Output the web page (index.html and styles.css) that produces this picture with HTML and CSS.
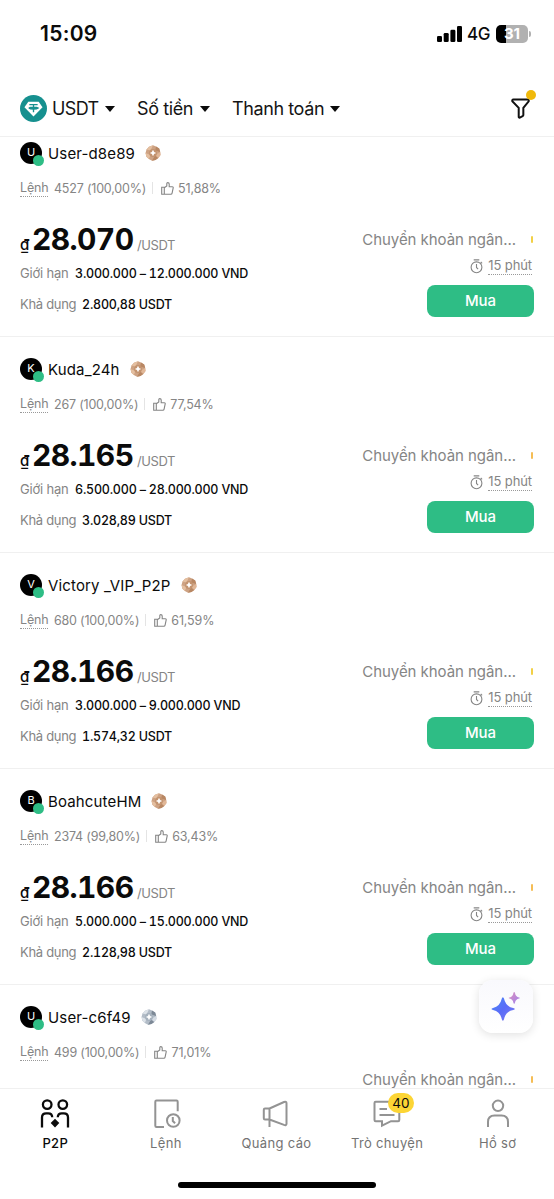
FILE: index.html
```html
<!DOCTYPE html>
<html lang="vi">
<head>
<meta charset="utf-8">
<meta name="viewport" content="width=device-width">
<title>P2P</title>
<link rel="stylesheet" href="styles.css">
</head>
<body>
<svg class="defs" aria-hidden="true">
  <defs>
    <linearGradient id="spark" x1="0" y1="0" x2="1" y2="1"><stop offset="0" stop-color="#4a8bf5"/><stop offset=".5" stop-color="#5a6cf8"/><stop offset="1" stop-color="#7d7cf0"/></linearGradient>
    <linearGradient id="spark-small" x1="0" y1="0" x2="1" y2="1"><stop offset="0" stop-color="#dc91bd"/><stop offset="1" stop-color="#a080ec"/></linearGradient>
  </defs>
  <symbol id="thumb" viewBox="0 0 13 13"><path d="M.7 5.2h2.6v7H.7zM3.3 5.8 5.8 4V1.6q0-1 .9-1 1.5 0 1.5 1.5v2.7h3.2q1 0 .8 1l-1.1 5.3q-.2 1.1-1.3 1.1H3.3"/></symbol>
  <symbol id="timer" viewBox="0 0 13 15"><circle cx="6.5" cy="8.3" r="5.4"/><path d="M3.7.9h5.6M6.5 5v3.5l1.6 1.6M10.7 3l1.4 1.4"/></symbol>
  <symbol id="medal" viewBox="0 0 16 16">
    <path fill="#cda283" d="m8 .3 3 1.2 3.2 1.9 1 3.5.3 3-2.2 3-2.8 2.1-3.5.7-3.2-1.6-2.4-2.3L.5 8l1-3.6L4 1.8z"/>
    <path fill="#e4bfa0" d="M8 .3 4 1.8 1.5 4.4l4 1.2zM.5 8l1 3.8 2.3 2.3 1.7-4z"/>
    <path fill="#b88763" d="m11 1.5 3.2 1.9 1 3.5-5-1.3zM7 15.7l3.5-.7 2.8-2.1-3.3-2.4z"/>
    <path fill="#e1b797" d="m15.2 6.9.3 3-2.2 3-3-3z"/>
    <circle cx="8" cy="8" r="3.9" fill="#c3936f"/>
    <path fill="#fff" d="M8 4.800q.5 2.700 3.200 3.200-2.700.500-3.200 3.200-.500-2.700-3.200-3.200 2.700-.500 3.200-3.200"/>
  </symbol>
  <symbol id="medal-silver" viewBox="0 0 16 16">
    <path fill="#b2bcc7" d="m8 .3 3 1.2 3.2 1.9 1 3.5.3 3-2.2 3-2.8 2.1-3.5.7-3.2-1.6-2.4-2.3L.5 8l1-3.6L4 1.8z"/>
    <path fill="#dce2e8" d="M8 .3 4 1.8 1.5 4.4l4 1.2zM.5 8l1 3.8 2.3 2.3 1.7-4z"/>
    <path fill="#7d8996" d="m11 1.5 3.2 1.9 1 3.5-5-1.3zM7 15.7l3.5-.7 2.8-2.1-3.3-2.4z"/>
    <path fill="#d5dce4" d="m15.2 6.9.3 3-2.2 3-3-3z"/>
    <circle cx="8" cy="8" r="3.9" fill="#a5b1bd"/>
    <path fill="#fff" d="M8 4.800q.5 2.700 3.200 3.200-2.700.500-3.200 3.200-.500-2.700-3.200-3.200 2.700-.500 3.200-3.200"/>
  </symbol>
</svg>

<div class="screen">
  <div class="status">
    <span class="clock">15:09</span>
    <div class="status-right">
      <svg class="signal" viewBox="0 0 26 16"><rect x="0" y="10" width="5" height="6" rx="1.3"/><rect x="6.7" y="7" width="5" height="9" rx="1.3"/><rect x="13.4" y="3.8" width="5" height="12.2" rx="1.3"/><rect x="20" y="0" width="5" height="16" rx="1.3"/></svg>
      <span class="network">4G</span>
      <span class="battery">31</span><i class="battery-cap"></i>
    </div>
  </div>

  <header class="filters">
    <svg class="coin" viewBox="0 0 26 26"><circle cx="13" cy="13" r="13" fill="#16908f"/><path fill="#fff" d="M8 6.6h10l3.7 5.3L13 20.7l-8.7-8.800z"/><path d="M9 9.300h8M13 9.300v7.400M8.500 12.500c1.500 1.300 7.500 1.300 9 0-1.500-1-7.500-1-9 0" fill="none" stroke="#16908f" stroke-width="1.300"/></svg>
    <span class="filter f-coin">USDT</span><i class="caret"></i>
    <span class="filter f-amount">Số tiền</span><i class="caret"></i>
    <span class="filter f-pay">Thanh toán</span><i class="caret"></i>
    <div class="funnel">
      <svg viewBox="0 0 18 20"><path d="M2.2 1.5h13.600q1.400 0 1 1.600l-5.100 6.300v6.800q0 .8-.7 1.100l-2.600 1.300q-1.100.4-1.100-.8V9.400L1.200 3.100q-.4-1.600 1-1.600z"/></svg>
      <i class="dot"></i>
    </div>
  </header>

  <main class="list">
    <article class="offer">
      <div class="user"><span class="avatar">U<i></i></span><span class="name">User-d8e89</span><svg class="medal"><use href="#medal"/></svg></div>
      <div class="stats"><span class="hint">Lệnh</span><span class="orders">4527 (100,00%)</span><i class="sep"></i><svg class="thumb"><use href="#thumb"/></svg><span>51,88%</span></div>
      <div class="body">
        <div class="info">
          <div class="price"><span class="cur">₫</span><b>28.070</b><span class="unit">/USDT</span></div>
          <div class="line"><span class="limit-label">Giới hạn</span><span class="value">3.000.000 – 12.000.000 VND</span></div>
          <div class="line"><span class="avail-label">Khả dụng</span><span class="value">2.800,88 USDT</span></div>
        </div>
        <div class="deal">
          <div class="method"><span>Chuyển khoản ngân...</span><i></i></div>
          <div class="time"><svg><use href="#timer"/></svg><span class="hint">15 phút</span></div>
          <button class="buy">Mua</button>
        </div>
      </div>
    </article>
    <article class="offer">
      <div class="user"><span class="avatar">K<i></i></span><span class="name">Kuda_24h</span><svg class="medal"><use href="#medal"/></svg></div>
      <div class="stats"><span class="hint">Lệnh</span><span class="orders">267 (100,00%)</span><i class="sep"></i><svg class="thumb"><use href="#thumb"/></svg><span>77,54%</span></div>
      <div class="body">
        <div class="info">
          <div class="price"><span class="cur">₫</span><b>28.165</b><span class="unit">/USDT</span></div>
          <div class="line"><span class="limit-label">Giới hạn</span><span class="value">6.500.000 – 28.000.000 VND</span></div>
          <div class="line"><span class="avail-label">Khả dụng</span><span class="value">3.028,89 USDT</span></div>
        </div>
        <div class="deal">
          <div class="method orange"><span>Chuyển khoản ngân...</span><i></i></div>
          <div class="time"><svg><use href="#timer"/></svg><span class="hint">15 phút</span></div>
          <button class="buy">Mua</button>
        </div>
      </div>
    </article>
    <article class="offer">
      <div class="user"><span class="avatar">V<i></i></span><span class="name">Victory _VIP_P2P</span><svg class="medal"><use href="#medal"/></svg></div>
      <div class="stats"><span class="hint">Lệnh</span><span class="orders">680 (100,00%)</span><i class="sep"></i><svg class="thumb"><use href="#thumb"/></svg><span>61,59%</span></div>
      <div class="body">
        <div class="info">
          <div class="price"><span class="cur">₫</span><b>28.166</b><span class="unit">/USDT</span></div>
          <div class="line"><span class="limit-label">Giới hạn</span><span class="value">3.000.000 – 9.000.000 VND</span></div>
          <div class="line"><span class="avail-label">Khả dụng</span><span class="value">1.574,32 USDT</span></div>
        </div>
        <div class="deal">
          <div class="method"><span>Chuyển khoản ngân...</span><i></i></div>
          <div class="time"><svg><use href="#timer"/></svg><span class="hint">15 phút</span></div>
          <button class="buy">Mua</button>
        </div>
      </div>
    </article>
    <article class="offer">
      <div class="user"><span class="avatar">B<i></i></span><span class="name">BoahcuteHM</span><svg class="medal"><use href="#medal"/></svg></div>
      <div class="stats"><span class="hint">Lệnh</span><span class="orders">2374 (99,80%)</span><i class="sep"></i><svg class="thumb"><use href="#thumb"/></svg><span>63,43%</span></div>
      <div class="body">
        <div class="info">
          <div class="price"><span class="cur">₫</span><b>28.166</b><span class="unit">/USDT</span></div>
          <div class="line"><span class="limit-label">Giới hạn</span><span class="value">5.000.000 – 15.000.000 VND</span></div>
          <div class="line"><span class="avail-label">Khả dụng</span><span class="value">2.128,98 USDT</span></div>
        </div>
        <div class="deal">
          <div class="method orange"><span>Chuyển khoản ngân...</span><i></i></div>
          <div class="time"><svg><use href="#timer"/></svg><span class="hint">15 phút</span></div>
          <button class="buy">Mua</button>
        </div>
      </div>
    </article>
    <article class="offer compact">
      <div class="user"><span class="avatar">U<i></i></span><span class="name">User-c6f49</span><svg class="medal"><use href="#medal-silver"/></svg></div>
      <div class="stats"><span class="hint">Lệnh</span><span class="orders">499 (100,00%)</span><i class="sep"></i><svg class="thumb"><use href="#thumb"/></svg><span>71,01%</span></div>
      <div class="body">
        <div class="info"></div>
        <div class="deal">
          <div class="method orange"><span>Chuyển khoản ngân...</span><i></i></div>
        </div>
      </div>
    </article>
  </main>

  <button class="assistant" aria-label="AI">
    <svg viewBox="0 0 30 30"><path fill="url(#spark)" d="M12.3 5.4q.8 0 1.2 1.7 1.7 7.9 9.5 9.4 1.7.4 1.7 1t-1.7 1.1q-7.8 1.5-9.5 9.3-.4 1.8-1.2 1.8t-1.2-1.8q-1.7-7.8-9-9.3Q.5 18.200.5 17.500q0-.6 1.600-1 7.300-1.500 9-9.400.400-1.700 1.200-1.700z"/><path fill="url(#spark-small)" d="M24 0q.600 0 .800 1 .700 3.800 4.200 4.600.900.200.900.600t-.900.600q-3.500.700-4.200 4.300-.200 1-.800 1t-.800-1q-.700-3.600-4-4.300-.900-.200-.900-.600t.900-.600q3.300-.800 4-4.600.200-1 .800-1z"/></svg>
  </button>

  <nav class="tabs">
    <a class="tab active"><svg viewBox="0 0 30 30"><g fill="none" stroke="#0b0b0b" stroke-width="2.300"><circle cx="7.200" cy="5.600" r="4.300"/><circle cx="22.800" cy="5.600" r="4.300"/><path d="M2 28.500V18.500q0-4.200 4.200-4.200h2q4 0 4 4M28 28.500V18.500q0-4.200-4.200-4.200h-2q-4 0-4 4"/></g><path fill="#0b0b0b" d="m15 19.700 4.300 4.400-4.300 4.400-4.300-4.400z"/></svg><span>P2P</span></a>
    <a class="tab"><svg viewBox="0 0 30 30"><g fill="none" stroke="#939393" stroke-width="2"><path d="M13 28H5.500q-1.200 0-1.200-1.200V2.700q0-1.200 1.200-1.200h20q1.200 0 1.200 1.200v9.500"/><circle cx="22.300" cy="21.500" r="6.300"/><path d="M21.800 18v4l2.300 2.200"/></g></svg><span>Lệnh</span></a>
    <a class="tab"><svg viewBox="0 0 30 30"><g fill="none" stroke="#939393" stroke-width="2"><path d="M8.500 9.500H4q-1.200 0-1.200 1.200v8.600q0 1.200 1.200 1.200h4.500zM8.500 9.500l14.500-6.500q2.500-.8 2.500 1.200v20.500q0 2-2.500 1.200L8.500 20.500V28"/></g></svg><span>Quảng cáo</span></a>
    <a class="tab"><svg viewBox="0 0 30 30"><g fill="none" stroke="#939393" stroke-width="2"><path d="M27.300 12v9q0 1.200-1.200 1.200H19l-9 4.500v-4.500H3.700q-1.200 0-1.200-1.200V4q0-1.200 1.200-1.200H17M7.500 10H15M7.500 16h15"/></g></svg><i class="badge">40</i><span>Trò chuyện</span></a>
    <a class="tab"><svg viewBox="0 0 30 30"><g fill="none" stroke="#939393" stroke-width="2"><circle cx="15" cy="6.800" r="5.200"/><path d="M5 28V23q0-6.500 6.500-6.500h7q6.500 0 6.500 6.500v5"/></g></svg><span>Hồ sơ</span></a>
  </nav>
  <div class="home"></div>
</div>
</body>
</html>
```
FILE: styles.css
```css
* { box-sizing: border-box; }
body { margin: 0; background: #fff; color: #0b0b0b; font-family: Inter, "Noto Sans", sans-serif; }
.defs { position: absolute; width: 0; height: 0; }
.screen { position: relative; width: 554px; height: 1199px; overflow: hidden; display: flex; flex-direction: column; }
span, b { white-space: nowrap; }

.status { height: 80px; padding: 20px 23px 0 40px; display: flex; justify-content: space-between; align-items: flex-start; }
.clock { font-size: 21px; line-height: 27px; font-weight: 600; letter-spacing: .3px; }
.status-right { display: flex; align-items: center; height: 27px; }
.signal { width: 26px; height: 16px; }
.network { font-size: 17px; font-weight: 450; margin: 0 7px 0 4px; width: 22px; letter-spacing: -.5px; }
.battery { width: 32px; height: 18px; border-radius: 5px; background: linear-gradient(90deg, #000 10px, #b1b1b1 10px); color: #fff; font-size: 15px; line-height: 18px; font-weight: 700; text-align: center; }
.battery-cap { width: 2px; height: 6px; margin: 0 0 0 1px; border-radius: 0 3px 3px 0; background: #b1b1b1; }

.filters { height: 57px; padding: 1px 20px 0; display: flex; align-items: center; border-bottom: 1px solid #f0f0f0; }
.coin { width: 27px; height: 27px; }
.filter { font-size: 18px; line-height: 24px; color: #151515; }
.f-coin { width: 47px; margin: 0 6px 0 5px; letter-spacing: -.6px; }
.f-amount { width: 57px; margin: 0 6px 0 22px; letter-spacing: -.4px; }
.f-pay { width: 92px; margin: 0 6px 0 22px; letter-spacing: -.4px; }
.caret { border: solid transparent; border-width: 6px 5px 0; border-top-color: #0b0b0b; }
.funnel { position: relative; margin-left: auto; margin-right: 4px; width: 19px; height: 21px; }
.funnel svg { display: block; width: 19px; height: 21px; fill: none; stroke: #111; stroke-width: 1.9; }
.dot { position: absolute; left: 15px; top: -8px; width: 10px; height: 10px; border-radius: 50%; background: #f0b90b; }

.list { height: 951px; overflow: hidden; display: flex; flex-direction: column; }
.offer { flex: none; height: 216px; padding: 19px 20px 0; border-bottom: 1px solid #f0f0f0; }
.offer:first-child { margin-top: -16px; }
.user { height: 26px; display: flex; align-items: center; }
.avatar { position: relative; width: 22px; height: 22px; border-radius: 50%; background: #000; color: #fff; font-size: 11px; line-height: 21px; text-align: center; }
.avatar i { position: absolute; left: 13px; top: 13px; width: 11px; height: 11px; border-radius: 50%; background: #2ebd85; }
.name { margin: 0 10px 0 6px; font-size: 15px; letter-spacing: .15px; }
.medal { width: 16px; height: 16px; }
.stats { height: 20px; margin-top: 12px; display: flex; align-items: center; color: #858585; font-size: 12.5px; letter-spacing: -.15px; }
.orders { letter-spacing: -.2px; }
.hint { border-bottom: 1px dotted #999; line-height: 17px; }
.stats .hint { width: 28px; margin-right: 6px; }
.sep { width: 1px; height: 12px; margin: 0 8px 0 6px; background: #e4e4e4; }
.thumb { width: 13px; height: 13px; margin-right: 4px; fill: none; stroke: #858585; stroke-width: 1.1; }

.body { display: flex; justify-content: space-between; }
.price { height: 39px; margin-top: 25px; display: flex; align-items: baseline; line-height: 32px; }
.price b, .value { font-variant-numeric: tabular-nums; }
.cur { width: 12px; font-size: 15px; font-weight: 500; }
.price b { font-size: 30px; letter-spacing: -.6px; width: 103px; }
.unit { margin-left: 2px; font-size: 13px; color: #858585; letter-spacing: -.4px; }
.line { display: flex; align-items: center; height: 22px; font-size: 13px; color: #858585; }
.line + .line { margin-top: 9px; }
.limit-label { width: 55px; letter-spacing: -.2px; }
.avail-label { width: 62px; letter-spacing: -.3px; }
.value { color: #0b0b0b; font-size: 12.5px; letter-spacing: -.21px; font-weight: 450; }

.deal { padding-top: 29px; display: flex; flex-direction: column; align-items: flex-end; }
.compact .deal { padding-top: 5px; }
.method { height: 24px; display: flex; align-items: center; font-size: 15px; letter-spacing: -.05px; color: #858585; padding-right: 1px; }
.method span { margin-right: 15px; }
.method i { width: 2px; height: 7px; border-radius: 1px; background: #f2d046; }
.method.orange i { background: #f5bd55; }
.time { height: 20px; margin: 5px 2px 0 0; display: flex; align-items: center; color: #858585; font-size: 13px; letter-spacing: -.1px; }
.time svg { width: 13px; height: 15px; margin-right: 5px; fill: none; stroke: #858585; stroke-width: 1.1; }
.buy { width: 107px; height: 32px; margin-top: 8.500px; padding: 0; border: 0; border-radius: 8px; background: #2ebd85; color: #fff; font: 500 15px/32px Inter, sans-serif; }

.assistant { position: absolute; left: 479px; top: 980px; width: 54px; height: 53px; border: 0; padding: 0; border-radius: 14px; background: linear-gradient(#f9f9fd, #fff); box-shadow: 0 2px 10px rgba(0, 0, 0, .12); }
.assistant svg { position: absolute; left: 12px; top: 12px; width: 29px; height: 29px; }

.tabs { height: 88px; padding: 10px 1px 0 0; display: flex; border-top: 1px solid #f0f0f0; background: #fff; }
.tab { position: relative; flex: 1; display: flex; flex-direction: column; align-items: center; color: #737373; font-size: 13px; }
.tab svg { width: 30px; height: 30px; }
.tab span { margin-top: 5px; line-height: 18px; letter-spacing: .35px; }
.tab.active { color: #0b0b0b; }
.tab.active span { font-weight: 500; }
.badge { position: absolute; left: 56px; top: -6px; width: 26px; height: 20px; border-radius: 10px; background: #fcd535; color: #0b0b0b; font-style: normal; font-size: 13.5px; line-height: 20px; text-align: center; }
.home { width: 198px; height: 6px; margin: 6px auto 0; border-radius: 3px; background: #000; }
```
